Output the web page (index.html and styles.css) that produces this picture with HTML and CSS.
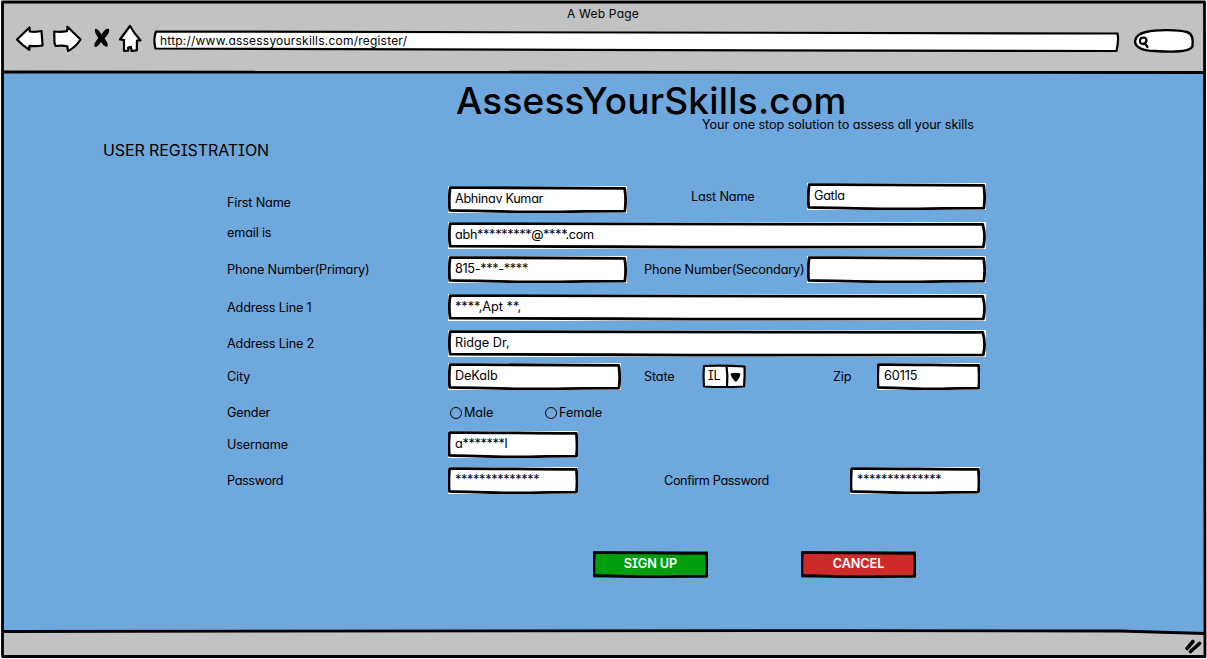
FILE: index.html
```html
<!DOCTYPE html>
<html lang="en">
<head>
<meta charset="utf-8">
<title>A Web Page</title>
<link rel="stylesheet" href="styles.css">
</head>
<body>
<svg class="defs" aria-hidden="true">
  <symbol id="sketch" viewBox="0 0 100 100" preserveAspectRatio="none">
    <path class="pen" d="M1.2 6 C30 5 55 8 98.7 9 Q99.7 50 98.8 93 C75 93 65 96 50 96 S20 92 1 90 Q.3 50 1.2 6Z"/>
  </symbol>
  <symbol id="sketch-long" viewBox="0 0 100 100" preserveAspectRatio="none">
    <path class="pen" d="M.4 6 C20 5 45 7 99.4 9 Q100 50 99.5 92 C75 91 60 94 45 93 S20 90 .4 89 Q.1 50 .4 6Z"/>
  </symbol>
</svg>
<div class="browser">
  <header class="chrome">
    <div class="window-title">A Web Page</div>
    <div class="toolbar">
      <svg class="nav" viewBox="0 0 145 36">
        <g class="icon">
          <path d="M17 15.5 L29.5 3.5 L29.8 7.5 Q36 8.3 41.5 7 L42.6 21.5 Q36 22.5 29.5 21.8 L29.3 25.8 Q23 22 17 15.500Z"/>
          <path d="M80.5 15.5 L67.5 2.8 L67 7.2 Q60 8.5 54.2 7.5 L54.5 19 L55.5 22 Q62 21 67.3 22.2 L68 27 Q76 23 80.500 15.500Z"/>
          <path d="M130 2 L120 15.500 L124 16 L124 27 L128.2 26.7 L128.2 23.500 L131 22.800 L131.600 27 L136.800 26.300 L137 16.500 L140.500 16.500 Q134 9 130 2Z"/>
        </g>
        <path class="stop" d="M95 5 Q97.500 4 101.500 10.500 Q105.500 3.500 109 5 Q110.500 8 104.500 14.500 Q108.500 19 107.500 22.500 Q104.500 23.500 101 18 Q97.500 24 94.300 22.500 Q93.500 20 98.300 14 Q94 8 95 5Z"/>
      </svg>
      <div class="address">
        <svg viewBox="0 0 966 22"><path d="M3 1.500 C300 0 600 3 964.500 3.500 Q966 10 963.500 21 C700 19 300 21 2.500 18.500 Q0 9 3 1.500Z"/></svg>
        <span>http://www.assessyourskills.com/register/</span>
      </div>
      <svg class="search" viewBox="0 0 62 26">
        <path class="well" d="M13 4 C25 1 46 2 54 4 C60 6 60 12 59.500 18 C57 25 35 24 22 23 C11 23 2 20 2 13 Q3 6 13 4Z"/>
        <path class="lens" d="M8 10 Q13.500 8.500 13.500 12.500 Q13 16 9.500 15.800 Q6.500 15.500 7 12.500 Q7 10.500 9 10 M12 15.500 L14.500 19"/>
      </svg>
    </div>
  </header>
  <main class="page">
    <h1 class="brand">AssessYourSkills.com</h1>
    <p class="tagline">Your one stop solution to assess all your skills</p>
    <h2 class="heading">USER REGISTRATION</h2>
    <form class="form">
      <div class="row row-name">
        <label class="label drop">First Name</label>
        <div class="field w-half drop"><svg><use href="#sketch"/></svg><span>Abhinav Kumar</span></div>
        <label class="label side-last">Last Name</label>
        <div class="field w-half"><svg><use href="#sketch"/></svg><span>Gatla</span></div>
      </div>
      <div class="row row-email">
        <label class="label">email is</label>
        <div class="field w-full"><svg><use href="#sketch-long"/></svg><span>abh*********@****.com</span></div>
      </div>
      <div class="row row-phone">
        <label class="label">Phone Number(Primary)</label>
        <div class="field w-half"><svg><use href="#sketch"/></svg><span>815-***-****</span></div>
        <label class="label side-phone">Phone Number(Secondary)</label>
        <div class="field w-half"><svg><use href="#sketch"/></svg><span></span></div>
      </div>
      <div class="row row-address">
        <label class="label">Address Line 1</label>
        <div class="field w-full loose"><svg><use href="#sketch-long"/></svg><span>****,Apt **,</span></div>
      </div>
      <div class="row row-address2">
        <label class="label">Address Line 2</label>
        <div class="field w-full loose"><svg><use href="#sketch-long"/></svg><span>Ridge Dr,</span></div>
      </div>
      <div class="row row-city">
        <label class="label">City</label>
        <div class="field w-city"><svg><use href="#sketch"/></svg><span>DeKalb</span></div>
        <label class="label side-state">State</label>
        <div class="select">
          <svg viewBox="0 0 44 25"><path class="box" d="M2 2 Q20 1 42.500 2.500 Q43 12 42 22.500 Q20 23.500 2 22.500 Q1 12 2 2Z M24.500 2 Q26 12 25 22.500"/><path d="M28.500 9.500 Q34 8 38.500 9.500 Q38 14 34 18 Q29.500 15 28.500 9.500Z"/></svg>
          <span>IL</span>
        </div>
        <label class="label side-zip">Zip</label>
        <div class="field w-zip"><svg><use href="#sketch"/></svg><span>60115</span></div>
      </div>
      <div class="row row-gender">
        <label class="label">Gender</label>
        <label class="radio"><i></i>Male</label>
        <label class="radio"><i></i>Female</label>
      </div>
      <div class="row row-user">
        <label class="label">Username</label>
        <div class="field w-short"><svg><use href="#sketch"/></svg><span>a*******l</span></div>
      </div>
      <div class="row row-pass">
        <label class="label">Password</label>
        <div class="field w-short secret"><svg><use href="#sketch"/></svg><span>**************</span></div>
        <label class="label side-confirm">Confirm Password</label>
        <div class="field w-short secret"><svg><use href="#sketch"/></svg><span>**************</span></div>
      </div>
      <div class="actions">
        <div class="button signup"><svg><use href="#sketch"/></svg><span>SIGN UP</span></div>
        <div class="button cancel"><svg><use href="#sketch"/></svg><span>CANCEL</span></div>
      </div>
    </form>
  </main>
  <footer class="status"></footer>
  <svg class="frame" viewBox="0 0 1207 659">
    <path d="M2.500 2 L1204.500 2 L1205 656.500 Q700 658.500 2.500 656.500Z"/>
    <path d="M3 72 Q600 74 1205 72.500"/>
    <path d="M3 631.500 C200 634 700 629 1120 631 L1205 633.500"/>
    <path class="grip" d="M1187 648.500 L1193 641.500 M1190.500 651.500 L1199.500 643.500"/>
  </svg>
</div>
</body>
</html>
```
FILE: styles.css
```css
* { box-sizing: border-box; }
body {
  margin: 0;
  font: 12.7px/18px Inter, "Liberation Sans", sans-serif;
  font-feature-settings: "cv11", "cv08";
  color: #000;
  background: #fff;
}
h1, h2, p { margin: 0; font-weight: 400; }
svg { display: block; overflow: visible; }
.defs { position: absolute; width: 0; height: 0; }
.pen { fill: none; stroke: #000; stroke-width: 2.8; stroke-linejoin: round; vector-effect: non-scaling-stroke; }

.browser {
  position: relative;
  display: flex;
  flex-direction: column;
  width: 1207px;
  height: 659px;
  padding: 2px 2px 3px 3px;
  overflow: hidden;
}
.frame { position: absolute; left: 0; top: 0; width: 1207px; height: 659px; pointer-events: none; }
.frame path { fill: none; stroke: #000; stroke-width: 2.8; stroke-linejoin: round; }
.frame .grip { stroke-width: 3.6; stroke-linecap: round; }

.chrome { height: 71px; background: #c2c2c2; }
.window-title { height: 20px; padding: 3px 2px 0 0; text-align: center; font-size: 12px; letter-spacing: 0.2px; }
.toolbar { display: flex; align-items: flex-start; }
.nav { width: 145px; height: 36px; margin-left: -3px; }
.icon path { fill: #fff; stroke: #000; stroke-width: 2.2; stroke-linejoin: round; }
.address { position: relative; width: 966px; height: 22px; margin: 8px 0 0 8px; padding-left: 7px; line-height: 22px; font-size: 12px; letter-spacing: 0.21px; }
.address svg { position: absolute; left: 0; top: 0; width: 966px; height: 22px; }
.address path { fill: #fff; stroke: #000; stroke-width: 2.2; }
.address span { position: relative; }
.search { width: 62px; height: 26px; margin: 6px 0 0 14px; }
.well { fill: #fff; stroke: #000; stroke-width: 2.4; }
.lens { fill: none; stroke: #000; stroke-width: 2.2; stroke-linecap: round; }
.nav { margin-top: 2px; }

.page { height: 559px; background: #6fa8dd; }
.brand { height: 43px; padding: 4px 0 0 453px; font-size: 37px; font-weight: 500; line-height: 48px; letter-spacing: 0.2px; white-space: nowrap; }
.tagline { height: 18px; padding-left: 699px; line-height: 17px; letter-spacing: -0.08px; white-space: nowrap; }
.heading { margin-top: 6px; padding-left: 100px; font-size: 16px; line-height: 20px; letter-spacing: -0.1px; }

.form { display: flex; flex-direction: column; padding: 23px 0 0 224px; }
.row { display: flex; align-items: center; height: 27px; }
.label { width: 221px; letter-spacing: -0.18px; white-space: nowrap; }
.row-name { height: 30px; align-items: flex-start; }
.row-name .drop { margin-top: 3px; }
.row-name .label.drop { padding-top: 8px; }
.row-name .side-last { padding-top: 5px; }
.side-last { width: 116px; margin-left: 64px; }
.row-email { margin-top: 9px; }
.row-email .label { padding-bottom: 6px; }
.row-phone { margin-top: 7px; }
.side-phone { width: 163px; margin-left: 17px; }
.row-address { margin-top: 11px; }
.row-address2 { margin-top: 9px; }
.row-city { margin-top: 6px; }
.side-state { width: 58px; margin-left: 23px; }
.side-zip { width: 44px; margin-left: 87px; }
.row-gender { margin-top: 9px; }
.row-user { margin-top: 5px; }
.row-pass { margin-top: 9px; }
.row-pass .label { letter-spacing: -0.38px; }
.side-confirm { width: 186px; margin-left: 86px; }

.field { position: relative; height: 27px; padding-left: 7px; background: #fff; line-height: 25px; letter-spacing: -0.33px; white-space: nowrap; }
.field svg, .button svg { position: absolute; left: 0; top: 0; width: 100%; height: 100%; }
.field span, .button span, .select span { position: relative; }
.w-half { width: 179px; }
.w-full { width: 538px; }
.w-city { width: 173px; letter-spacing: -0.1px; }
.w-zip { width: 103px; letter-spacing: -0.1px; }
.w-short { width: 130px; }
.loose { letter-spacing: 0; }

.select { position: relative; width: 44px; height: 25px; padding-left: 6px; line-height: 23px; }
.select svg { position: absolute; left: 0; top: 0; width: 44px; height: 25px; }
.select .box { fill: #fff; stroke: #000; stroke-width: 2.2; stroke-linejoin: round; }

.radio { display: flex; align-items: center; gap: 2px; width: 95px; padding-left: 2px; letter-spacing: -0.1px; }
.radio i { width: 12px; height: 12px; border: 1px solid #000; border-radius: 50%; }

.actions { display: flex; gap: 93px; margin-top: 57px; padding-left: 366px; }
.button { position: relative; width: 115px; height: 27px; color: #fff; font-weight: 600; line-height: 26px; letter-spacing: -0.1px; text-align: center; }
.signup { background: #009e0f; }
.cancel { background: #cf2a2a; }

.status { height: 24px; background: #c2c2c2; }
```
